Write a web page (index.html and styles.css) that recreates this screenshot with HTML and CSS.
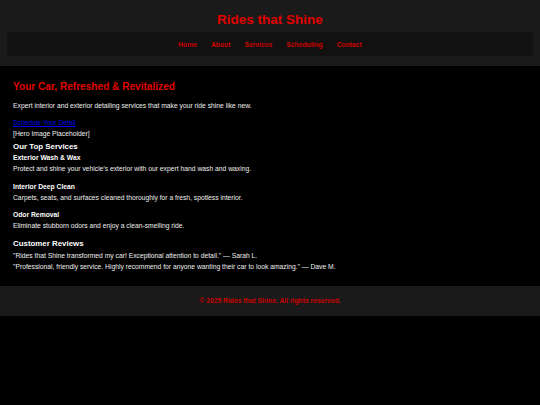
FILE: index.html
```html
<!DOCTYPE html>
<html lang="en">
<head>
<meta charset="utf-8">
<title>Rides that Shine</title>
<link rel="stylesheet" href="styles.css">
</head>
<body>
<header class="site-header">
  <h1 class="brand">Rides that Shine</h1>
  <nav class="nav">
    <a href="#" class="nav-link">Home</a>
    <a href="#" class="nav-link">About</a>
    <a href="#" class="nav-link">Services</a>
    <a href="#" class="nav-link">Scheduling</a>
    <a href="#" class="nav-link">Contact</a>
  </nav>
</header>
<main class="main">
  <section class="hero">
    <h2 class="hero-title">Your Car, Refreshed &amp; Revitalized</h2>
    <p class="hero-text">Expert interior and exterior detailing services that make your ride shine like new.</p>
    <a href="#" class="cta">Schedule Your Detail</a>
    <div class="placeholder">[Hero Image Placeholder]</div>
  </section>
  <section class="services">
    <h2 class="section-title">Our Top Services</h2>
    <div class="service">
      <h3 class="service-title">Exterior Wash &amp; Wax</h3>
      <p class="text">Protect and shine your vehicle's exterior with our expert hand wash and waxing.</p>
    </div>
    <div class="service">
      <h3 class="service-title">Interior Deep Clean</h3>
      <p class="text">Carpets, seats, and surfaces cleaned thoroughly for a fresh, spotless interior.</p>
    </div>
    <div class="service">
      <h3 class="service-title">Odor Removal</h3>
      <p class="text">Eliminate stubborn odors and enjoy a clean-smelling ride.</p>
    </div>
  </section>
  <section class="reviews">
    <h2 class="section-title">Customer Reviews</h2>
    <p class="text">"Rides that Shine transformed my car! Exceptional attention to detail." — Sarah L.</p>
    <p class="text">"Professional, friendly service. Highly recommend for anyone wanting their car to look amazing." — Dave M.</p>
  </section>
</main>
<footer class="site-footer">
  <p class="footer-text">© 2025 Rides that Shine. All rights reserved.</p>
</footer>
</body>
</html>
```
FILE: styles.css
```css
* { box-sizing: border-box; }
html, body { margin: 0; padding: 0; }
body {
  background: #000;
  color: #eee;
  font-family: "Liberation Sans", Arial, sans-serif;
  font-size: 6.75px;
  line-height: 11px;
}
.site-header {
  background: #1a1a1a;
  padding: 12px 7px 10px;
}
.brand {
  margin: 0 0 4px;
  text-align: center;
  color: #e00000;
  font-size: 13.5px;
  line-height: 16px;
  font-weight: bold;
}
.nav {
  background: #111;
  height: 24px;
  display: flex;
  justify-content: center;
  align-items: center;
  gap: 14px;
}
.nav-link {
  color: #cc0000;
  font-weight: bold;
  text-decoration: none;
  font-size: 6.75px;
}
.main {
  padding: 15px 13px 13.3px;
}
.hero-title {
  margin: 0 0 7.3px;
  color: #e00000;
  font-size: 10.1px;
  line-height: 12px;
  font-weight: bold;
}
.hero-text {
  margin: 0 0 5.6px;
}
.cta {
  display: block;
  color: #0000ee;
  text-decoration: underline;
}
.placeholder {
  margin: 0.2px 0 2px;
}
.section-title {
  margin: 0;
  color: #fff;
  font-size: 7.9px;
  line-height: 11px;
  font-weight: bold;
}
.service {
  margin-bottom: 6.7px;
}
.service-title {
  margin: 0;
  color: #fff;
  font-size: 6.75px;
  line-height: 11px;
  font-weight: bold;
}
.text {
  margin: 0;
}
.reviews .section-title {
  margin-bottom: 1.2px;
}
.site-footer {
  background: #1a1a1a;
  height: 30px;
  display: flex;
  align-items: center;
  justify-content: center;
}
.footer-text {
  margin: 0;
  color: #cc0000;
  font-weight: bold;
}
```
